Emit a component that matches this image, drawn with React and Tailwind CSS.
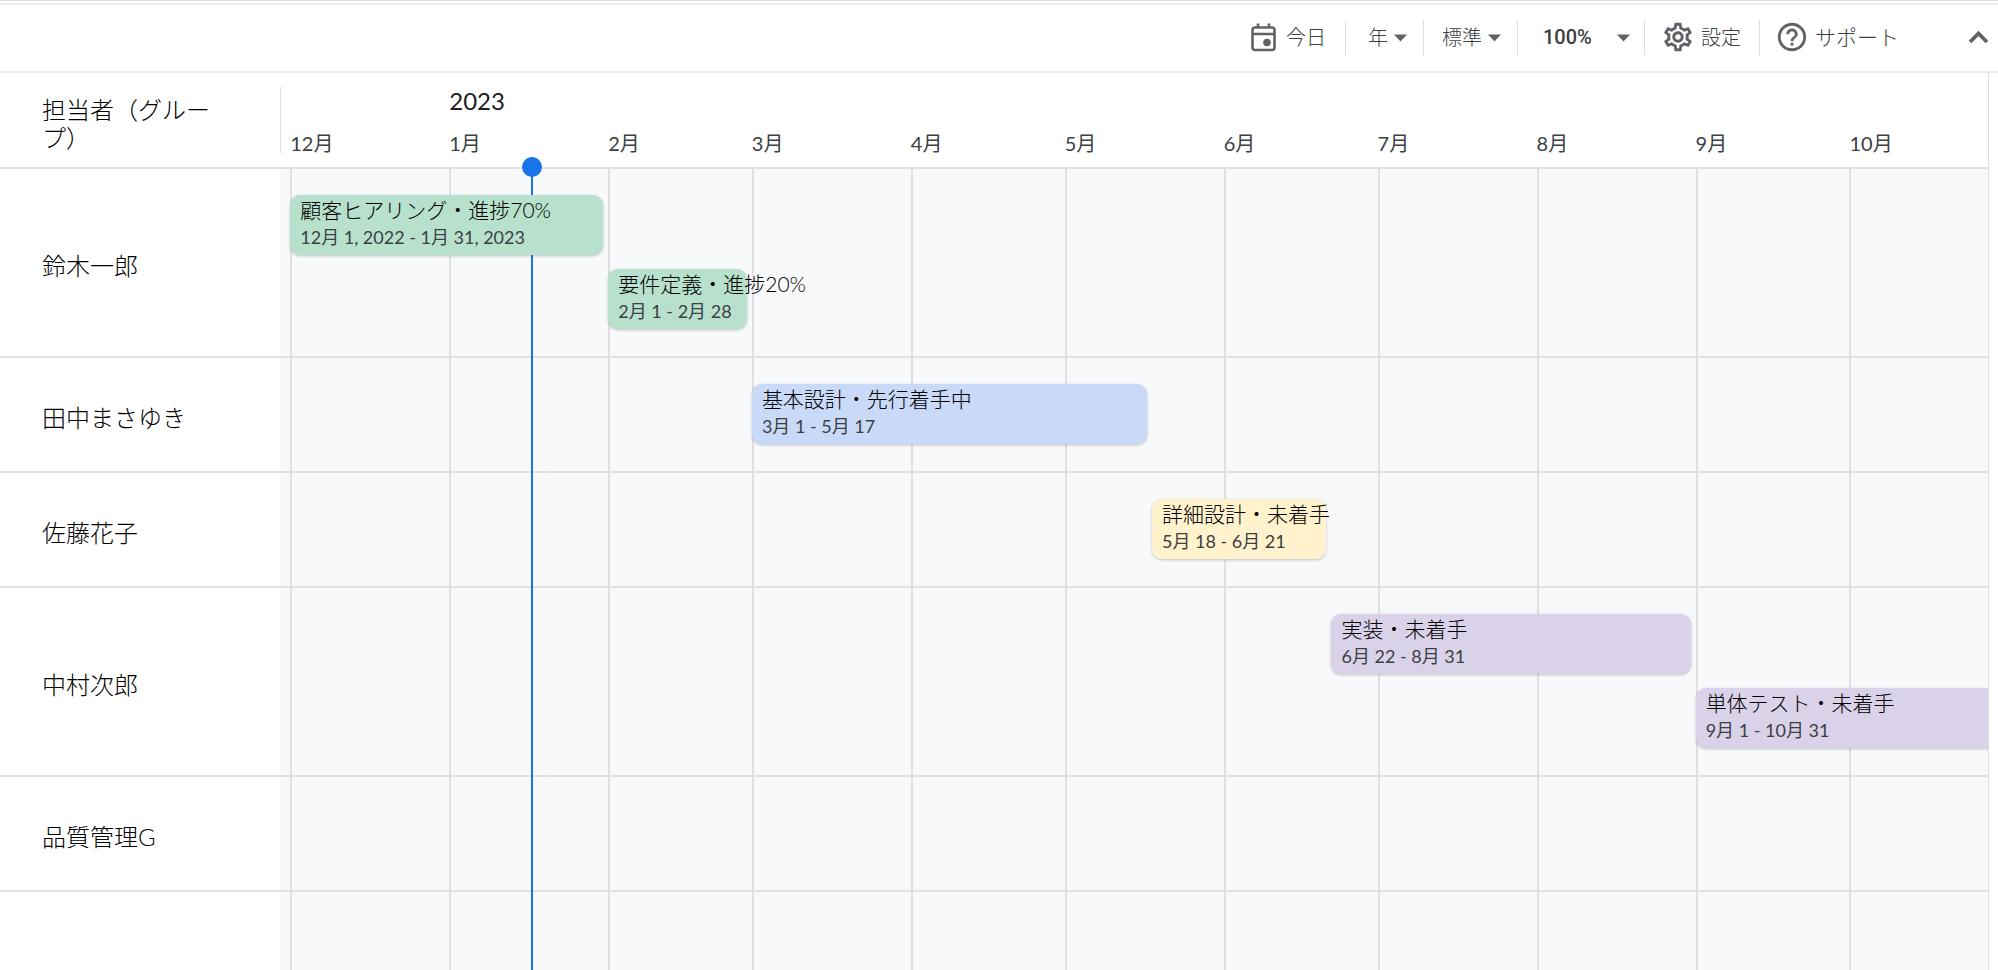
import { MdHelpOutline, MdOutlineSettings } from "react-icons/md";
import clsx from "clsx";

// The visible range starts two days before December 1st
const RANGE_DAYS = 333;
const LEAD_DAYS = 2;
const TODAY = 49;

const months = [
  { label: "12月", days: 31 },
  { label: "1月", days: 31, year: "2023" },
  { label: "2月", days: 28 },
  { label: "3月", days: 31 },
  { label: "4月", days: 30 },
  { label: "5月", days: 31 },
  { label: "6月", days: 30 },
  { label: "7月", days: 31 },
  { label: "8月", days: 31 },
  { label: "9月", days: 30 },
  { label: "10月", days: 31 },
];

// start = days since December 1st
const rows = [
  {
    name: "鈴木一郎",
    tasks: [
      {
        title: "顧客ヒアリング・進捗70%",
        dates: "12月 1, 2022 - 1月 31, 2023",
        start: 0,
        days: 62,
        color: "bg-[#b7e1cd]",
      },
      {
        title: "要件定義・進捗20%",
        dates: "2月 1 - 2月 28",
        start: 62,
        days: 28,
        color: "bg-[#b7e1cd]",
      },
    ],
  },
  {
    name: "田中まさゆき",
    tasks: [
      {
        title: "基本設計・先行着手中",
        dates: "3月 1 - 5月 17",
        start: 90,
        days: 78,
        color: "bg-[#c9daf8]",
      },
    ],
  },
  {
    name: "佐藤花子",
    tasks: [
      {
        title: "詳細設計・未着手",
        dates: "5月 18 - 6月 21",
        start: 168,
        days: 35,
        color: "bg-[#fff2cc]",
      },
    ],
  },
  {
    name: "中村次郎",
    tasks: [
      {
        title: "実装・未着手",
        dates: "6月 22 - 8月 31",
        start: 203,
        days: 71,
        color: "bg-[#d9d2e9]",
      },
      {
        title: "単体テスト・未着手",
        dates: "9月 1 - 10月 31",
        start: 274,
        days: 61,
        color: "bg-[#d9d2e9]",
      },
    ],
  },
  { name: "品質管理G", tasks: [] },
];

const pct = (days) => `${(days / RANGE_DAYS) * 100}%`;

function CalendarIcon() {
  return (
    <svg width="25" height="29" viewBox="0 0 25 29" fill="none" aria-hidden="true">
      <rect x="1.5" y="4.5" width="22" height="22.5" rx="2.5" stroke="#5f6368" strokeWidth="2.6" />
      <path d="M1.5 11h22M7 0.500v4M18 0.500v4" stroke="#5f6368" strokeWidth="2.6" />
      <circle cx="16" cy="19.500" r="3.800" fill="#5f6368" />
    </svg>
  );
}

function Picker({ label, options, className, caretClass }) {
  return (
    <div className={clsx("relative flex h-[35px] items-center border-l border-[#dadce0]", className)}>
      <select
        aria-label={label}
        className="w-full cursor-pointer appearance-none bg-transparent text-inherit outline-none"
      >
        {options.map((o) => (
          <option key={o}>{o}</option>
        ))}
      </select>
      <svg
        className={clsx("pointer-events-none absolute top-3.5", caretClass)}
        width="13"
        height="8"
        viewBox="0 0 13 8"
        aria-hidden="true"
      >
        <path d="M0 0.500h13L6.500 7.500z" fill="#5f6368" />
      </svg>
    </div>
  );
}

function Toolbar() {
  return (
    <div className="flex h-[68px] items-center justify-end border-b-2 border-[#ebebeb] pr-[9px] pb-0.5 text-[20px] leading-[28px] font-light text-[#3c4043]">
      <button className="flex items-center gap-2.5 pr-[19px]">
        <CalendarIcon />
        今日
      </button>
      <Picker label="期間" options={["年", "月", "週"]} className="w-[78px] pl-[22px]" caretClass="right-4" />
      <Picker label="カードの高さ" options={["標準", "縮小"]} className="w-[94px] pl-[18px]" caretClass="right-4" />
      <Picker
        label="ズーム"
        options={["100%", "75%", "50%"]}
        className="w-[127px] pl-[25px] font-[Roboto,sans-serif] font-medium text-[#3c4043]"
        caretClass="right-3.5"
      />
      <button className="flex h-[35px] w-[115px] items-center gap-1.5 border-l border-[#dadce0] pl-4">
        <MdOutlineSettings size={34} color="#5f6368" />
        設定
      </button>
      <button className="flex h-[35px] items-center gap-1.5 border-l border-[#dadce0] pl-[15px] text-[21px]">
        <MdHelpOutline size={34} color="#5f6368" />
        サポート
      </button>
      <button aria-label="閉じる" className="ml-[69px]">
        <svg width="21" height="14" viewBox="0 0 21 14" fill="none">
          <path d="M2 12l8.500-8.500L19 12" stroke="#5f6368" strokeWidth="3.800" />
        </svg>
      </button>
    </div>
  );
}

function TimelineHeader() {
  return (
    <div className="flex h-24 shrink-0 border-b-2 border-[#e1e2e5]">
      <div className="flex w-[280px] shrink-0 items-center pt-2 pr-14 pl-[42px] text-[24px] leading-[28px] font-light text-black">
        担当者（グループ）
      </div>
      <div className="relative flex min-w-0 grow items-end pb-2.5">
        <div className="absolute top-3.5 left-0 h-[66px] w-px bg-[#dadce0]" />
        <div className="shrink-0" style={{ width: pct(LEAD_DAYS) }} />
        {months.map((m) => (
          <div key={m.label} className="shrink-0" style={{ width: pct(m.days) }}>
            {m.year && <div className="mb-3.5 text-[24px] leading-[28px] text-[#202124]">{m.year}</div>}
            <div className="text-[20px] leading-[28px] text-[#3c4043]">{m.label}</div>
          </div>
        ))}
      </div>
    </div>
  );
}

function TaskBar({ task }) {
  return (
    <div className="pr-[5px]" style={{ marginLeft: pct(task.start + LEAD_DAYS), width: pct(task.days) }}>
      <div
        className={clsx(
          "h-[60px] rounded-[10px] pt-px pl-2.5 whitespace-nowrap shadow-[0_1px_3px_rgba(60,64,67,0.3)]",
          task.color
        )}
      >
        <div className="text-[21px] leading-[27px] font-light text-black">{task.title}</div>
        <div className="text-[18px] leading-[29px] text-[#3c4043]">{task.dates}</div>
      </div>
    </div>
  );
}

export default function App() {
  return (
    <div className="flex h-screen flex-col overflow-hidden border-t border-[#dadada] bg-white pt-0.5 font-[Lato,'Noto_Sans_CJK_JP',sans-serif] font-normal">
      <div className="border-t-2 border-[#ebebeb]">
        <Toolbar />
      </div>
      <div className="mr-[9px] flex min-h-0 grow flex-col overflow-hidden border-r border-[#dadce0]">
        <TimelineHeader />
        <div className="relative isolate flex grow flex-col">
          {/* Month grid */}
          <div className="absolute inset-y-0 right-0 left-[280px] -z-10 flex overflow-hidden bg-[#f8f9fb]">
            <div className="shrink-0" style={{ width: pct(LEAD_DAYS) }} />
            {months.map((m) => (
              <div key={m.label} className="shrink-0 border-l-2 border-[#dfe0e3]" style={{ width: pct(m.days) }} />
            ))}
          </div>
          {/* Today line, above the row borders and below the task bars */}
          <div className="pointer-events-none absolute inset-y-0 right-0 left-[280px]">
            <div className="absolute inset-y-0 w-0.5 bg-[#1a73e8]" style={{ left: pct(TODAY) }}>
              <div className="absolute -top-3 -left-[9px] size-5 rounded-full bg-[#1a73e8]" />
            </div>
          </div>

          {rows.map((row) => (
            <div key={row.name} className="flex min-h-[115px] border-b-2 border-[#e1e2e5]">
              <div className="flex w-[280px] shrink-0 items-center pt-1.5 pl-[42px] text-[24px] font-light text-black">
                {row.name}
              </div>
              <div className="relative flex min-w-0 grow flex-col gap-3.5 pt-[26px] pb-[27px]">
                {row.tasks.map((task) => (
                  <TaskBar key={task.title} task={task} />
                ))}
              </div>
            </div>
          ))}
        </div>
      </div>
    </div>
  );
}
